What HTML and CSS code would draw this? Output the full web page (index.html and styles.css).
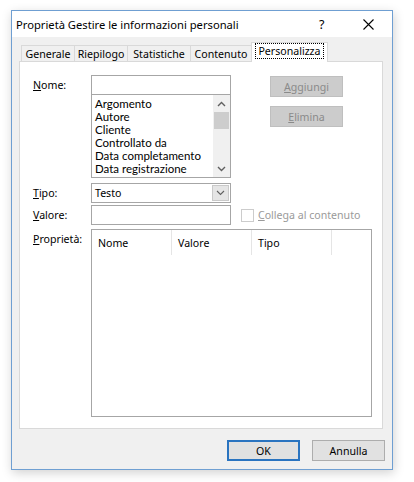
FILE: index.html
```html
<!DOCTYPE html>
<html lang="it">
<head>
<meta charset="utf-8">
<title>Proprietà</title>
<link rel="stylesheet" href="styles.css">
</head>
<body>
<div class="dialog">
  <div class="titlebar">
    <span class="title">Proprietà Gestire le informazioni personali</span>
    <span class="help">?</span>
    <span class="close"><svg width="11" height="11" viewBox="0 0 11 11"><path d="M0.5 0.5L10.5 10.5M10.5 0.5L0.5 10.5" stroke="#000" stroke-width="1.1" fill="none"/></svg></span>
  </div>
  <div class="body">
    <div class="tabs">
      <div class="tab t1">Generale</div>
      <div class="tab t2">Riepilogo</div>
      <div class="tab t3">Statistiche</div>
      <div class="tab t4">Contenuto</div>
      <div class="tab active"><span class="focus">Personalizza</span></div>
    </div>
    <div class="panel">
      <div class="row row-nome">
        <div class="label"><u>N</u>ome:</div>
        <div class="namecol">
          <div class="input"></div>
          <div class="listbox">
            <div class="items">
              <div class="item">Argomento</div>
              <div class="item">Autore</div>
              <div class="item">Cliente</div>
              <div class="item">Controllato da</div>
              <div class="item">Data completamento</div>
              <div class="item">Data registrazione</div>
            </div>
            <div class="scrollbar">
              <div class="arrow"><svg width="9" height="6" viewBox="0 0 9 6"><path d="M1 5L4.5 1.5L8 5" stroke="#606060" stroke-width="1.4" fill="none"/></svg></div>
              <div class="thumb"></div>
              <div class="track"></div>
              <div class="arrow"><svg width="9" height="6" viewBox="0 0 9 6"><path d="M1 1L4.5 4.5L8 1" stroke="#606060" stroke-width="1.4" fill="none"/></svg></div>
            </div>
          </div>
        </div>
        <div class="btncol">
          <div class="btn disabled"><u>A</u>ggiungi</div>
          <div class="btn disabled"><u>E</u>limina</div>
        </div>
      </div>
      <div class="row row-tipo">
        <div class="label"><u>T</u>ipo:</div>
        <div class="combo">
          <span class="combo-text">Testo</span>
          <span class="dropbtn"><svg width="9" height="6" viewBox="0 0 9 6"><path d="M1 1L4.5 4.5L8 1" stroke="#606060" stroke-width="1.1" fill="none"/></svg></span>
        </div>
      </div>
      <div class="row row-valore">
        <div class="label"><u>V</u>alore:</div>
        <div class="input field"></div>
        <div class="check">
          <span class="box"></span>
          <span class="check-text"><u>C</u>ollega al contenuto</span>
        </div>
      </div>
      <div class="row row-prop">
        <div class="label"><u>P</u>roprietà:</div>
        <div class="table">
          <div class="thead">
            <div class="th c1">Nome</div>
            <div class="th c2">Valore</div>
            <div class="th c3">Tipo</div>
            <div class="th c4"></div>
          </div>
        </div>
      </div>
    </div>
    <div class="footer">
      <div class="btn ok">OK</div>
      <div class="btn">Annulla</div>
    </div>
  </div>
</div>
</body>
</html>
```
FILE: styles.css
```css
* { box-sizing: border-box; }
html, body { margin: 0; padding: 0; background: #fff; }
body {
  font-family: "Noto Sans", "DejaVu Sans", sans-serif;
  font-size: 10.6px;
  color: #000;
  width: 414px;
  height: 482px;
  overflow: hidden;
}
u { text-decoration: underline; text-underline-offset: 1px; }
.dialog {
  margin: 10px 0 0 11px;
  width: 382px;
  height: 460px;
  border: 1px solid #6f9fd2;
  background: #f0f0f0;
  box-shadow: 1px 3px 10px rgba(0,0,0,0.18);
  display: flex;
  flex-direction: column;
}
.titlebar {
  height: 26px;
  background: #fff;
  display: flex;
  align-items: center;
  padding-left: 4px;
  font-size: 11.2px;
}
.title { flex: 1; }
.help { width: 44px; font-size: 12.5px; }
.close { width: 29px; display: flex; align-items: center; }
.body {
  flex: 1;
  display: flex;
  flex-direction: column;
  padding: 5px 9px 0 7px;
}
.tabs {
  height: 19px;
  display: flex;
  align-items: flex-end;
  padding-left: 2px;
  position: relative;
  z-index: 1;
}
.tab {
  height: 16px;
  border: 1px solid #d9d9d9;
  border-bottom: none;
  border-left: none;
  background: #f0f0f0;
  display: flex;
  align-items: center;
  justify-content: center;
}
.t1 { width: 54px; border-left: 1px solid #d9d9d9; }
.t2 { width: 53px; }
.t3 { width: 63px; }
.t4 { width: 61px; margin-right: -1px; }
.tab.active {
  width: 77px;
  height: 20px;
  margin-bottom: -1px;
  background: #fff;
  border-left: 1px solid #d9d9d9;
  padding-bottom: 3px;
}
.focus {
  border: 1px dotted #000;
  padding: 0 2px;
  line-height: 14px;
}
.panel {
  height: 368px;
  background: #fff;
  border: 1px solid #d9d9d9;
  padding: 13px 0 0 13px;
  display: flex;
  flex-direction: column;
}
.row { display: flex; }
.label { width: 58px; line-height: 20px; }
.namecol { width: 140px; display: flex; flex-direction: column; }
.input {
  width: 140px;
  height: 20px;
  border: 1px solid #a6a6a6;
  background: #fff;
}
.listbox {
  height: 83px;
  border: 1px solid #a6a6a6;
  border-top: none;
  display: flex;
}
.items {
  flex: 1;
  padding: 2px 0 0 3px;
  font-family: "Lato", "Noto Sans", sans-serif;
  font-size: 11.5px;
  display: flex;
  flex-direction: column;
}
.item { height: 13px; line-height: 13px; }
.scrollbar {
  width: 17px;
  background: #f0f0f0;
  display: flex;
  flex-direction: column;
}
.arrow { height: 17px; display: flex; align-items: center; justify-content: center; }
.thumb { height: 17px; margin: 0 1px; background: #cdcdcd; }
.track { flex: 1; }
.btncol {
  margin-left: 39px;
  padding-top: 1px;
  display: flex;
  flex-direction: column;
  gap: 9px;
}
.btn {
  width: 73px;
  height: 21px;
  border: 1px solid #adadad;
  background: #e1e1e1;
  display: flex;
  align-items: center;
  justify-content: center;
}
.btn.disabled {
  background: #cccccc;
  border-color: #bfbfbf;
  color: #8a8a8a;
}
.row-tipo { margin-top: 5px; }
.combo {
  width: 140px;
  height: 20px;
  border: 1px solid #a6a6a6;
  display: flex;
  align-items: center;
  padding-left: 3px;
}
.combo-text { flex: 1; }
.dropbtn {
  width: 17px;
  height: 16px;
  margin-right: 1px;
  background: #e5e5e5;
  border: 1px solid #c9c9c9;
  display: flex;
  align-items: center;
  justify-content: center;
}
.row-valore { margin-top: 2px; }
.check { margin-left: 10px; display: flex; align-items: center; gap: 4px; color: #9a9a9a; }
.box { width: 13px; height: 13px; border: 1px solid #cccccc; background: #fff; }
.row-prop { margin-top: 4px; }
.table {
  width: 281px;
  height: 188px;
  border: 1px solid #a6a6a6;
}
.thead { display: flex; height: 25px; }
.th {
  border-right: 1px solid #e5e5e5;
  padding-left: 6px;
  display: flex;
  align-items: center;
}
.c1 { width: 80px; }
.c2 { width: 80px; }
.c3 { width: 80px; }
.c4 { width: 0; flex: 1; border-right: none; }
.footer {
  flex: 1;
  display: flex;
  justify-content: flex-end;
  align-items: flex-start;
  padding-top: 11px;
  gap: 12px;
  margin-right: -2px;
}
.ok { border: 2px solid #2a74c0; }
```
